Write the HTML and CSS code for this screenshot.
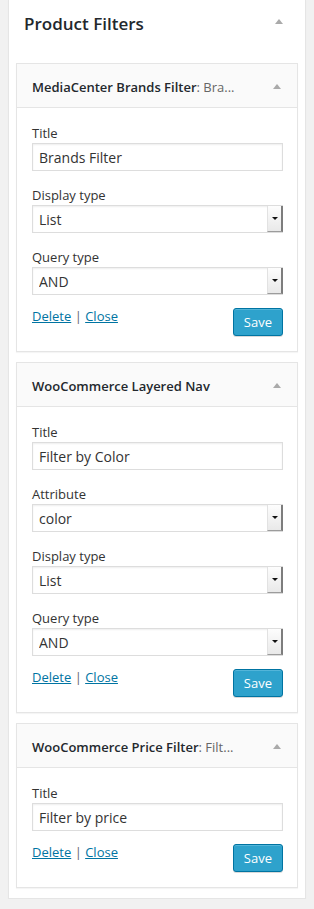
FILE: index.html
```html
<!DOCTYPE html>
<html lang="en">
<head>
    <meta charset="UTF-8">
    <meta name="viewport" content="width=device-width, initial-scale=1.0">
    <title>Widgets - Product Filters</title>
    <link rel="stylesheet" href="styles.css">
</head>
<body>
<div class="sidebar">
    <div class="sidebar-name">
        <h2>Product Filters</h2>
        <span class="toggle"></span>
    </div>

    <div class="widget">
        <div class="widget-top">
            <h4>MediaCenter Brands Filter<span class="in-widget-title">: Bra...</span></h4>
            <span class="toggle"></span>
        </div>
        <div class="widget-inside">
            <div class="field">
                <label for="w1-title">Title</label>
                <input type="text" id="w1-title" value="Brands Filter">
            </div>
            <div class="field">
                <label for="w1-display">Display type</label>
                <div class="select-wrap">
                    <select id="w1-display"><option>List</option><option>Dropdown</option></select>
                    <span class="select-arrow"></span>
                </div>
            </div>
            <div class="field">
                <label for="w1-query">Query type</label>
                <div class="select-wrap">
                    <select id="w1-query"><option>AND</option><option>OR</option></select>
                    <span class="select-arrow"></span>
                </div>
            </div>
            <div class="widget-actions">
                <div class="links"><a href="#">Delete</a> | <a href="#">Close</a></div>
                <button type="button" class="button-primary">Save</button>
            </div>
        </div>
    </div>

    <div class="widget">
        <div class="widget-top">
            <h4>WooCommerce Layered Nav</h4>
            <span class="toggle"></span>
        </div>
        <div class="widget-inside">
            <div class="field">
                <label for="w2-title">Title</label>
                <input type="text" id="w2-title" value="Filter by Color">
            </div>
            <div class="field">
                <label for="w2-attr">Attribute</label>
                <div class="select-wrap">
                    <select id="w2-attr"><option>color</option><option>size</option></select>
                    <span class="select-arrow"></span>
                </div>
            </div>
            <div class="field">
                <label for="w2-display">Display type</label>
                <div class="select-wrap">
                    <select id="w2-display"><option>List</option><option>Dropdown</option></select>
                    <span class="select-arrow"></span>
                </div>
            </div>
            <div class="field">
                <label for="w2-query">Query type</label>
                <div class="select-wrap">
                    <select id="w2-query"><option>AND</option><option>OR</option></select>
                    <span class="select-arrow"></span>
                </div>
            </div>
            <div class="widget-actions">
                <div class="links"><a href="#">Delete</a> | <a href="#">Close</a></div>
                <button type="button" class="button-primary">Save</button>
            </div>
        </div>
    </div>

    <div class="widget">
        <div class="widget-top">
            <h4>WooCommerce Price Filter<span class="in-widget-title">: Filt...</span></h4>
            <span class="toggle"></span>
        </div>
        <div class="widget-inside">
            <div class="field">
                <label for="w3-title">Title</label>
                <input type="text" id="w3-title" value="Filter by price">
            </div>
            <div class="widget-actions">
                <div class="links"><a href="#">Delete</a> | <a href="#">Close</a></div>
                <button type="button" class="button-primary">Save</button>
            </div>
        </div>
    </div>
</div>
</body>
</html>
```

FILE: styles.css
```css
body {
    margin: 0;
    background-color: #f1f1f1;
    font-family: "Open Sans", "Liberation Sans", sans-serif;
    font-size: 13px;
    color: #444;
}

.sidebar {
    width: 298px;
    box-sizing: border-box;
    margin: 0 8px;
    padding: 0 7px 10px;
    background-color: #fff;
    border: 1px solid #e5e5e5;
    border-top: none;
    box-shadow: 0 1px 1px rgba(0, 0, 0, 0.04);
}

.sidebar-name {
    display: flex;
    justify-content: space-between;
    align-items: flex-start;
    padding: 12px 8px 27px;
}

.sidebar-name h2 {
    margin: 0;
    font-size: 17px;
    font-weight: 600;
    line-height: 24px;
    color: #23282d;
}

.sidebar-name .toggle {
    margin: 7px 7px 0 0;
}

.toggle {
    width: 0;
    height: 0;
    border-left: 4px solid transparent;
    border-right: 4px solid transparent;
    border-bottom: 5px solid #aaa;
}

.widget {
    background-color: #fff;
    border: 1px solid #e5e5e5;
    box-shadow: 0 1px 1px rgba(0, 0, 0, 0.04);
    margin-bottom: 10px;
}

.widget:last-child {
    margin-bottom: 0;
}

.widget-top {
    display: flex;
    justify-content: space-between;
    align-items: center;
    height: 44px;
    box-sizing: border-box;
    padding: 2px 16px 0 15px;
    background-color: #fafafa;
    border-bottom: 1px solid #e5e5e5;
}

.widget-top h4 {
    margin: 0;
    font-size: 13px;
    font-weight: 600;
    line-height: 18px;
    color: #23282d;
    white-space: nowrap;
}

.in-widget-title {
    font-weight: normal;
    color: #666;
}

.widget-inside {
    padding: 16px 14px 15px 15px;
}

.field + .field {
    margin-top: 15px;
}

label {
    display: block;
    line-height: 18px;
    margin-bottom: 1px;
    color: #333;
}

input[type="text"], select {
    display: block;
    width: 100%;
    height: 28px;
    box-sizing: border-box;
    margin: 0;
    padding: 0 6px;
    border: 1px solid #ddd;
    border-radius: 0;
    background-color: #fff;
    box-shadow: inset 0 1px 2px rgba(0, 0, 0, 0.07);
    font-family: "Open Sans", "Liberation Sans", sans-serif;
    font-size: 14px;
    color: #333;
    outline: none;
}

select {
    -webkit-appearance: none;
    appearance: none;
}

.select-wrap {
    position: relative;
}

.select-arrow {
    position: absolute;
    top: 1px;
    right: 0;
    bottom: 1px;
    width: 13px;
    display: flex;
    align-items: center;
    justify-content: center;
    background: linear-gradient(#fdfdfd, #e9e9e9);
    border-left: 1px solid #e2e2e2;
    border-right: 2px solid #7d7d7d;
    border-bottom: 1px solid #9c9c9c;
    pointer-events: none;
}

.select-arrow::after {
    content: "";
    width: 0;
    height: 0;
    border-left: 3px solid transparent;
    border-right: 3px solid transparent;
    border-top: 3px solid #111;
}

.widget-actions {
    display: flex;
    justify-content: space-between;
    align-items: flex-start;
    margin-top: 12px;
}

.links {
    line-height: 18px;
    color: #666;
}

.links a {
    color: #0074a2;
    text-decoration: underline;
}

.button-primary {
    margin-top: 1px;
    height: 28px;
    padding: 0 10px 1px;
    border: 1px solid #0074a2;
    border-radius: 3px;
    background-color: #2ea2cc;
    box-shadow: inset 0 1px 0 rgba(120, 200, 230, 0.5), 0 1px 0 rgba(0, 0, 0, 0.15);
    color: #fff;
    font-family: "Open Sans", "Liberation Sans", sans-serif;
    font-size: 13px;
    line-height: 26px;
    cursor: pointer;
}
```
